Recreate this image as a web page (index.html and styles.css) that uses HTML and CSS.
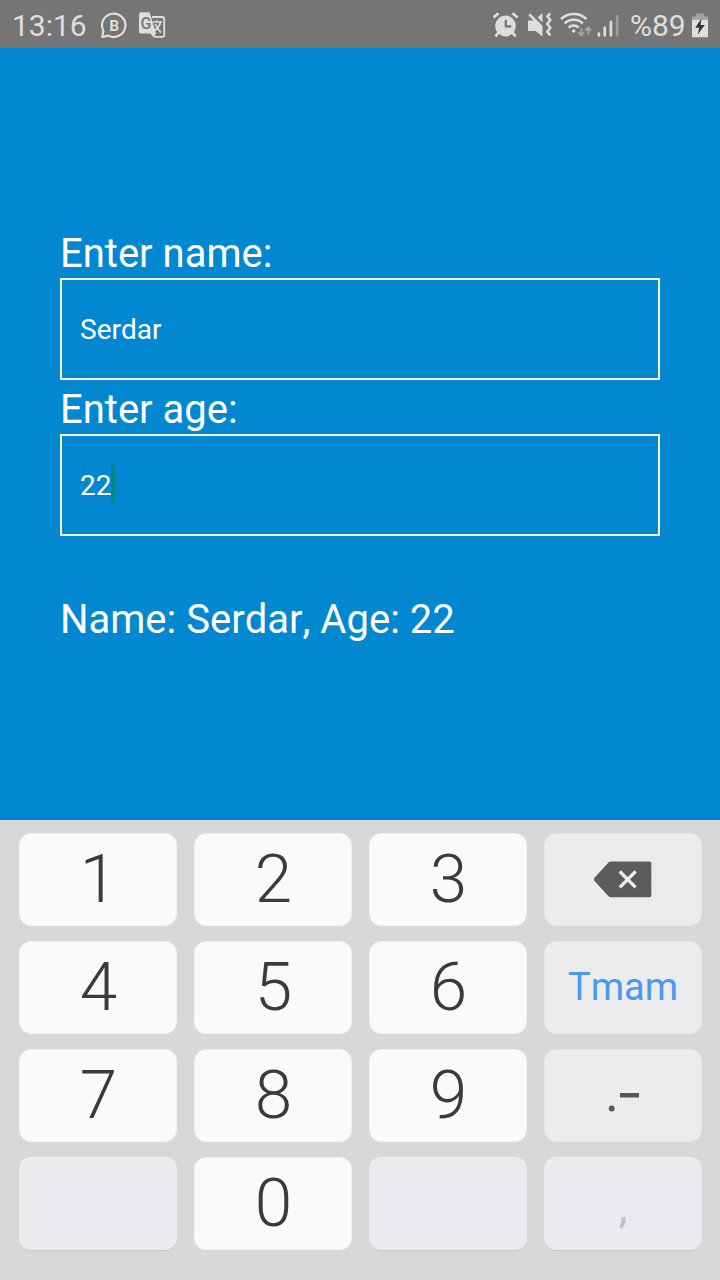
FILE: index.html
```html
<!DOCTYPE html>
<html lang="tr">
<head>
<meta charset="utf-8">
<title>Form</title>
<link rel="stylesheet" href="styles.css">
</head>
<body>
<div class="screen">
  <header class="status">
    <span class="clock">13:16</span>
    <svg class="ico-chat" width="28" height="28" viewBox="0 0 28 28">
      <path d="M2.3 24.8 L3.4 18.800 A11.700 11.700 0 1 1 8.200 23.600 Z" fill="none" stroke="#dedede" stroke-width="2.200" stroke-linejoin="round"/>
      <text x="14.200" y="18.600" text-anchor="middle" class="glyph-b">B</text>
    </svg>
    <svg class="ico-translate" width="28" height="28" viewBox="0 0 28 28">
      <path d="M13 5 H23.300 Q25.200 5 25.200 6.900 V23 Q25.200 24.900 23.300 24.900 H15.200" fill="none" stroke="#dedede" stroke-width="1.800"/>
      <path d="M2.200 0.300 H10.600 L17 21.600 H2.200 Q0 21.600 0 19.400 V2.500 Q0 .3 2.200 .3Z M11 21.300 H17 L14.800 25.800Z" fill="#dedede"/>
      <path d="M14 10 H23 M17.800 8.300 V10 M21.500 10 Q20 16 15.500 18.500 M16.200 12 Q18 16.500 22 20.500" fill="none" stroke="#dedede" stroke-width="1.700"/>
      <text x="7" y="16.500" text-anchor="middle" class="glyph-g">G</text>
    </svg>
    <span class="spacer"></span>
    <svg class="ico-alarm" width="26" height="26" viewBox="0 0 26 26">
      <circle cx="12.500" cy="14" r="10.400" fill="#dedede"/>
      <path d="M.5 5.500 L5.500 1.300 M24.500 5.500 L19.500 1.300 M5.500 20.500 L2.500 24.300 M19.500 20.500 L22.500 24.300" stroke="#dedede" stroke-width="2.800" fill="none"/>
      <path d="M12.800 7.700 V14.300 H18.300" stroke="#757575" stroke-width="2.200" fill="none"/>
    </svg>
    <svg class="ico-mute" width="26" height="26" viewBox="0 0 26 26">
      <path d="M0 8.500 H5.500 L.3 3.300 L2.200 1.400 L14.500 13.700 V24.500 L7.500 19 H0Z M14.500 1 V10.500 L9.600 5.600Z" fill="#dedede"/>
      <path d="M22.300 1.300 L19.300 4.300 L22.300 8 L19.300 12 L22.300 15.800 L19.300 19.600 L22.300 23.500" fill="none" stroke="#dedede" stroke-width="2.600" stroke-linejoin="round"/>
    </svg>
    <svg class="ico-wifi" width="33" height="26" viewBox="0 0 33 26">
      <g fill="none" stroke="#dedede" stroke-width="2.500">
        <path d="M1 7.200 A18.500 18.500 0 0 1 26.500 7.200"/>
        <path d="M4.700 11.500 A13 13 0 0 1 22.800 11.500"/>
        <path d="M8.700 15.600 A7.300 7.300 0 0 1 18.800 15.600"/>
      </g>
      <circle cx="13.700" cy="19" r="1.800" fill="#dedede"/>
      <path d="M21.300 16.500 V23 M18.500 20.300 L21.300 23.300 L24.100 20.300 M28.300 22.500 V16 M25.500 18.500 L28.300 15.500 L31.100 18.500" fill="none" stroke="#a3a3a3" stroke-width="2"/>
    </svg>
    <svg class="ico-signal" width="24" height="26" viewBox="0 0 24 26">
      <path d="M1.900 20.500 V22.500 M7.700 14.500 V22.500 M13.900 8.700 V22.500" stroke="#dedede" stroke-width="2.600" stroke-linecap="round"/>
      <path d="M20.200 3 V22.500" stroke="#9c9c9c" stroke-width="2.600" stroke-linecap="round"/>
    </svg>
    <span class="percent">%89</span>
    <svg class="ico-battery" width="16" height="25" viewBox="0 0 16 25">
      <path d="M4 .5 H12 V3.500 H16 V7 H0 V3.500 H4Z" fill="#a3a3a3"/>
      <path d="M0 6.800 H16 V24.300 H0Z" fill="#dedede"/>
      <path d="M9.500 5.500 L3.200 14.800 H7.200 L5.800 21.500 L12.800 12 H8.600Z" fill="#333"/>
    </svg>
  </header>

  <main class="form">
    <label class="label" for="name">Enter name:</label>
    <div class="field" id="name">Serdar</div>
    <label class="label label-age" for="age">Enter age:</label>
    <div class="field" id="age">22<span class="caret"></span></div>
    <p class="result">Name: Serdar, Age: 22</p>
  </main>

  <section class="keypad">
    <div class="key">1</div>
    <div class="key">2</div>
    <div class="key">3</div>
    <div class="key fn back">
      <svg width="58" height="37" viewBox="0 0 58 37">
        <path d="M17 .5 H55.500 Q57.300 .5 57.300 2.300 V34.700 Q57.300 36.300 55.500 36.300 H17 Q15.500 36.300 14.500 35.300 L.5 20 Q-.6 18.400 .5 16.800 L14.500 1.500 Q15.500 .5 17 .5Z" fill="#5c5c5c"/>
        <path d="M25.800 10.500 L41.600 26.300 M41.600 10.500 L25.800 26.300" stroke="#ececec" stroke-width="3.300"/>
      </svg>
    </div>
    <div class="key">4</div>
    <div class="key">5</div>
    <div class="key">6</div>
    <div class="key fn done">Tmam</div>
    <div class="key">7</div>
    <div class="key">8</div>
    <div class="key">9</div>
    <div class="key fn symbols">
      <svg width="32" height="20" viewBox="0 0 32 20">
        <circle cx="3.700" cy="16.500" r="2.900" fill="#555"/>
        <path d="M12 1 H31 V5.500 H12Z" fill="#555"/>
      </svg>
    </div>
    <div class="key off"></div>
    <div class="key">0</div>
    <div class="key off"></div>
    <div class="key off comma">,</div>
  </section>
</div>
</body>
</html>
```
FILE: styles.css
```css
* { box-sizing: border-box; }
body { margin: 0; font-family: Roboto, "Liberation Sans", sans-serif; font-kerning: none; }
.screen { width: 720px; height: 1280px; display: flex; flex-direction: column; overflow: hidden; }
svg { display: block; flex: none; }

.status { height: 48px; flex: none; display: flex; align-items: flex-start; padding: 0 12px; background: #757575; color: #dedede; }
.clock, .percent { font-size: 30px; line-height: 36px; padding-top: 8px; white-space: nowrap; }
.clock { width: 88px; }
.percent { width: 62px; }
.spacer { flex: 1; }
.ico-chat { margin-top: 12px; }
.ico-translate { margin: 12px 0 0 11px; }
.ico-alarm { margin-top: 12px; }
.ico-mute { margin: 12px 0 0 9px; }
.ico-wifi { margin: 12px 0 0 6px; }
.ico-signal { margin: 13px 9px 0 4px; }
.ico-battery { margin-top: 13px; }
.glyph-b { font-size: 15.5px; font-weight: 700; fill: #dedede; }
.glyph-g { font-size: 16px; font-weight: 500; fill: #757575; }

.form { height: 772px; flex: none; padding: 182px 60px 0; background: #0288d1; color: #fff; }
.label { display: block; height: 48px; font-size: 40px; line-height: 47px; }
.label-age { margin-top: 6px; }
.field { height: 102px; display: flex; align-items: center; padding: 0 18px; border: 2px solid #fff; font-size: 28px; }
.caret { width: 4px; height: 38px; margin-top: -2px; background: #018786; }
.result { margin: 60px 0 0; font-size: 40px; line-height: 47px; }

.keypad { flex: 1; display: grid; grid-template-columns: repeat(4, 158px); grid-auto-rows: 93px; column-gap: 17px; row-gap: 15px; padding: 13px 19px 0; background: #d8d8d8; }
.key { display: flex; align-items: center; justify-content: center; padding: 0 0 2px 1px; border: 1px solid #f1f1f1; border-radius: 12px; background: #fafafa; color: #3a3a3a; font-size: 67.5px; font-weight: 300; line-height: 89px; }
.fn { background: #ececec; border-color: #e6e6e6; }
.back { padding: 0; }
.symbols { padding: 13px 0 0 2px; }
.done { padding: 0; color: #4797f5; font-size: 38px; font-weight: 400; }
.off { background: #e9ebee; border-color: #e9ebee; border-top-color: #f0f0f0; box-shadow: 0 1px 0 #c9cbcf; }
.comma { padding: 5px 0 0; color: #c2c3c5; font-size: 46px; font-weight: 400; }
```
